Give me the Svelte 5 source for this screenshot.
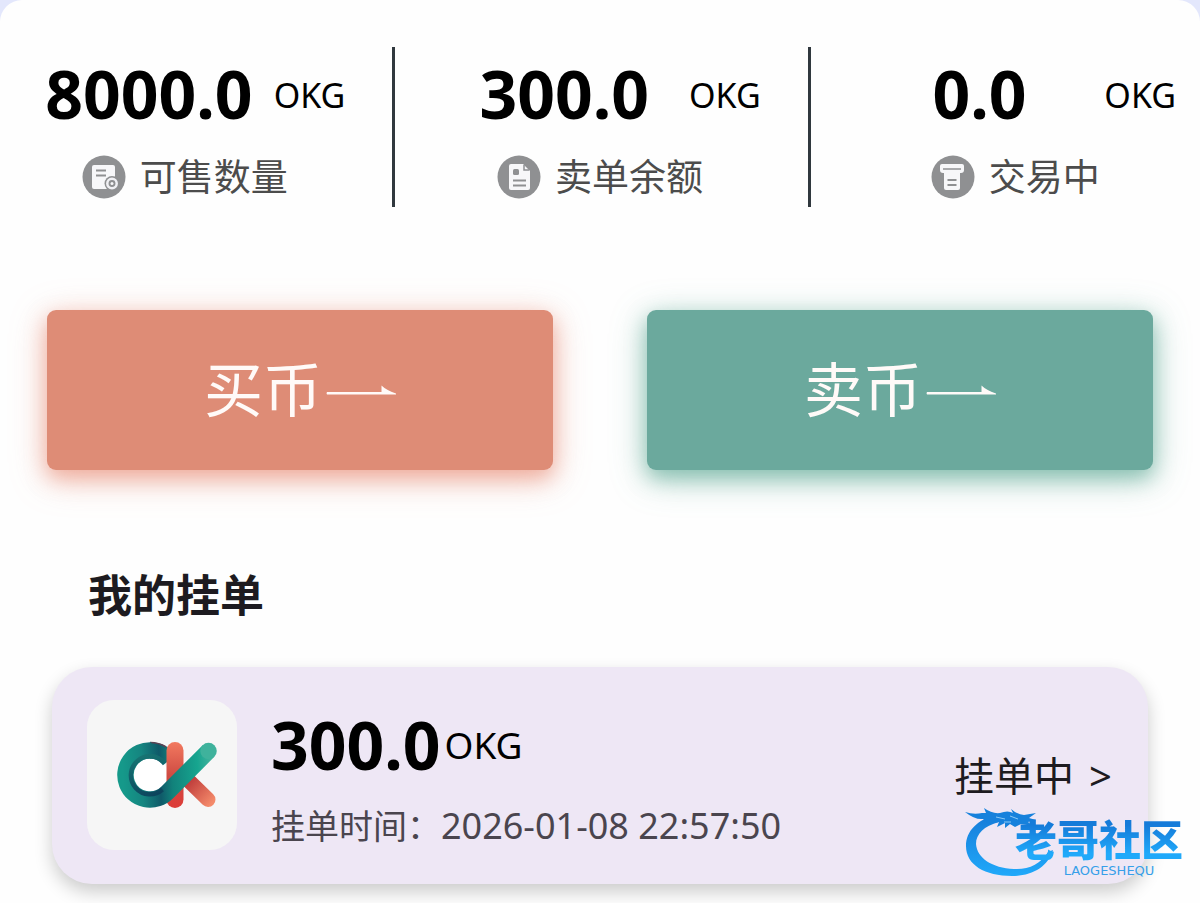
<script>
  const stats = [
    { value: '8000.0', unit: 'OKG', label: '可售数量', icon: 'available' },
    { value: '300.0', unit: 'OKG', label: '卖单余额', icon: 'balance' },
    { value: '0.0', unit: 'OKG', label: '交易中', icon: 'trading' }
  ];
  const actions = [
    { label: '买币', kind: 'buy' },
    { label: '卖币', kind: 'sell' }
  ];
  const orders = [
    { amount: '300.0', unit: 'OKG', time: '2026-01-08 22:57:50', status: '挂单中' }
  ];
</script>

<main>
  <section class="stats">
    {#each stats as s}
      <div class="stat">
        <div class="figure"><strong>{s.value}</strong><span>{s.unit}</span></div>
        <div class="caption">
          <svg class="badge" viewBox="0 0 44 44" aria-hidden="true">
            <circle cx="22" cy="22" r="21.5" fill="#8f9092" />
            {#if s.icon === 'available'}
              <path d="M12 10h19a2 2 0 0 1 2 2v20a2 2 0 0 1-2 2H12a2 2 0 0 1-2-2V12a2 2 0 0 1 2-2z" fill="#f7f7f9" />
              <path d="M14 15.500h10M14 20.500h10" stroke="#8f9092" stroke-width="2" />
              <circle cx="30" cy="28.500" r="7.500" fill="#8f9092" />
              <circle cx="30" cy="28.500" r="4.700" fill="#8f9092" stroke="#f0f0f4" stroke-width="2.500" />
              <circle cx="30" cy="28.500" r="1.500" fill="#f7f7f9" />
            {:else if s.icon === 'balance'}
              <path d="M14 9h12l7 7v17a2 2 0 0 1-2 2H14a2 2 0 0 1-2-2V11a2 2 0 0 1 2-2z" fill="#f7f7f9" />
              <path d="M27 10v5h5" fill="none" stroke="#8f9092" stroke-width="1.500" />
              <rect x="16" y="14" width="6" height="6" rx="1.500" fill="#8f9092" />
              <path d="M16 25.500h13M16 30.500h13" stroke="#8f9092" stroke-width="2" />
            {:else}
              <path d="M11 9h20a2 2 0 0 1 2 2v4q0 3-3 3H12q-3 0-3-3v-4a2 2 0 0 1 2-2z" fill="#f7f7f9" />
              <path d="M12 14h18" stroke="#8f9092" stroke-width="1.500" />
              <path d="M13 15h16v18a2 2 0 0 1-2 2H15a2 2 0 0 1-2-2z" fill="#f7f7f9" />
              <path d="M16.500 25h9M16.500 30h9" stroke="#8f9092" stroke-width="2" />
            {/if}
          </svg>
          <span>{s.label}</span>
        </div>
      </div>
    {/each}
  </section>

  <section class="actions">
    {#each actions as a}
      <button type="button" class={a.kind}>
        {a.label}
        <svg viewBox="0 0 70 16" aria-hidden="true">
          <path d="M1 8h54.500V1.500Q60 6 70 9.500v1H1q-1-1.200 0-2.500z" fill="currentColor" />
        </svg>
      </button>
    {/each}
  </section>

  <h2>我的挂单</h2>

  {#each orders as o}
    <article class="order">
      <div class="logo">
        <svg viewBox="-12 0 116 68" aria-hidden="true">
          <defs>
            <linearGradient id="ring" gradientUnits="userSpaceOnUse" x1="6" y1="14" x2="94" y2="10">
              <stop offset="0" stop-color="#15998a" />
              <stop offset=".22" stop-color="#158580" />
              <stop offset=".42" stop-color="#0f5a69" />
              <stop offset=".56" stop-color="#12827b" />
              <stop offset=".85" stop-color="#16a58f" />
              <stop offset="1" stop-color="#3fb29c" />
            </linearGradient>
            <linearGradient id="inner" x1="0" y1="0" x2="0" y2="1">
              <stop offset="0" stop-color="#17706f" />
              <stop offset="1" stop-color="#0b3c58" />
            </linearGradient>
            <linearGradient id="stem" x1="0" y1="0" x2="0" y2="1">
              <stop offset="0" stop-color="#f2795f" />
              <stop offset=".5" stop-color="#cf4c43" />
              <stop offset="1" stop-color="#dd3c38" />
            </linearGradient>
            <linearGradient id="leg" gradientUnits="userSpaceOnUse" x1="70" y1="38" x2="96" y2="62">
              <stop offset="0" stop-color="#b93436" />
              <stop offset="1" stop-color="#f48a6a" />
            </linearGradient>
          </defs>
          <circle cx="34" cy="34" r="18" fill="#fff" />
          <path d="M34 9.500A24.500 24.500 0 0 1 53.500 19.200" fill="none" stroke="url(#ring)" stroke-width="16.500" />
          <path d="M34 1.500Q43 1.500 50 6" fill="none" stroke="#5b4253" stroke-width="1.500" />
          <rect x="50.500" y="1" width="17" height="66" rx="8.500" fill="url(#stem)" />
          <path d="M72 39L92 58.500" stroke="url(#leg)" stroke-width="15" stroke-linecap="round" />
          <path d="M92.500 10L51.300 51.300A24.500 24.500 0 1 1 35 9.500" fill="none" stroke="url(#ring)" stroke-width="16.500" stroke-linejoin="round" />
          <circle cx="92.500" cy="10" r="8.250" fill="#3fb29c" />
          <path d="M46.500 48.500A19 19 0 1 1 48 21.500" fill="none" stroke="url(#inner)" stroke-width="4.500" opacity=".8" />
        </svg>
      </div>
      <div class="details">
        <div class="amount"><strong>{o.amount}</strong><span>{o.unit}</span></div>
        <div class="time">挂单时间：<time>{o.time}</time></div>
      </div>
      <a class="status" href="#order">{o.status}<span>&gt;</span></a>
      <div class="mark">
        <svg viewBox="0 0 92 70" aria-hidden="true">
          <defs>
            <linearGradient id="dragon" x1="0" y1="0" x2="0" y2="1">
              <stop offset="0" stop-color="#167bd8" />
              <stop offset="1" stop-color="#20a9fa" />
            </linearGradient>
          </defs>
          <path d="M32 6C12 12 1 23 1 38c0 19 19 30 46 30 20 0 36-9 41-26l-5 2C76 56 63 62 49 61 27 60 12 50 11 36 11 26 19 18 34 14z" fill="url(#dragon)" />
          <path d="M0 4q9 3 17 1l4 0-2-5q8 6 16 5 8-3 13 0l-2-4q7 6 13 6l12-2-7 5 7 2-8 2 5 4-12-2-6 3-5-3-5 4v-5l-8 4 2-5-10 2-6-5Q10 12 0 4z" fill="#1681dc" />
          <path d="M31 9l9 2M45 8l8 3M39 14l7 0" stroke="#8bc9f5" stroke-width="1" />
        </svg>
        <div class="words"><b>老哥社区</b><small>LAOGESHEQU</small></div>
      </div>
    </article>
  {/each}
</main>

<style>
  :global(body) {
    margin: 0;
    background: #e3e7fc;
  }
  main {
    box-sizing: border-box;
    min-height: 100vh;
    padding: 47px 0 20px;
    overflow: hidden;
    border-radius: 22px 22px 0 0;
    background: #fefefe;
    color: #000;
    font-family: "Noto Sans", "Noto Sans CJK SC", sans-serif;
  }
  .stats {
    display: grid;
    grid-template-columns: repeat(3, 1fr);
    column-gap: 46px;
  }
  .stat {
    position: relative;
    display: flex;
    flex-direction: column;
    justify-content: space-between;
    height: 160px;
    box-sizing: border-box;
    padding-bottom: 8px;
  }
  .stat + .stat::before {
    content: "";
    position: absolute;
    left: -23px;
    top: 0;
    bottom: 0;
    width: 3px;
    background: #30383e;
  }
  .figure {
    display: flex;
    align-items: center;
    height: 92px;
    padding: 0 24px;
    line-height: 92px;
  }
  .figure strong {
    flex: 1;
    text-align: center;
  }
  strong {
    font-size: 66px;
    font-weight: 700;
  }
  .figure span {
    padding-top: 4px;
    font-size: 34px;
  }
  .caption {
    display: flex;
    align-items: center;
    justify-content: center;
    gap: 14px;
    height: 44px;
    color: #4c4c4c;
    font-size: 37px;
    line-height: 44px;
  }
  .badge {
    width: 44px;
    height: 44px;
  }
  .actions {
    display: grid;
    grid-template-columns: 1fr 1fr;
    gap: 94px;
    padding: 103px 47px 0;
  }
  button {
    display: flex;
    align-items: center;
    justify-content: center;
    gap: 4px;
    height: 160px;
    padding: 0 0 8px;
    border: 0;
    border-radius: 9px;
    color: #fffaf8;
    font: inherit;
    font-size: 59px;
    cursor: pointer;
  }
  button svg {
    width: 70px;
    height: 16px;
    margin-top: 12px;
  }
  .buy {
    background: #de8c76;
    box-shadow: 0 8px 36px rgba(232, 132, 108, .4), 0 8px 20px rgba(232, 132, 108, .5);
  }
  .sell {
    background: #6ba99d;
    box-shadow: 0 8px 36px rgba(75, 160, 138, .4), 0 8px 20px rgba(75, 160, 138, .5);
  }
  h2 {
    margin: 93px 88px 40px;
    color: #1d1b20;
    font-size: 44px;
    font-weight: 700;
    line-height: 64px;
  }
  .order {
    position: relative;
    display: flex;
    align-items: flex-start;
    margin: 0 52px;
    padding: 33px 36px 20px 35px;
    border-radius: 40px;
    background: #eee7f5;
    box-shadow: 0 8px 18px rgba(0, 0, 0, .2);
  }
  .logo {
    display: grid;
    place-items: center;
    width: 150px;
    height: 150px;
    border-radius: 27px;
    background: #f6f6f6;
  }
  .logo svg {
    width: 116px;
    height: 68px;
  }
  .details {
    flex: 1;
    padding-left: 34px;
  }
  .amount {
    display: flex;
    align-items: center;
    gap: 4px;
    height: 88px;
    line-height: 88px;
  }
  .amount span {
    padding-top: 2px;
    font-size: 37px;
  }
  .time {
    height: 76px;
    color: #4a454e;
    font-size: 34px;
    line-height: 76px;
  }
  time {
    font-size: 36px;
  }
  .status {
    display: flex;
    gap: 15px;
    padding-top: 46px;
    color: #1d1b20;
    font-size: 40px;
    line-height: 60px;
    text-decoration: none;
  }
  .mark {
    position: absolute;
    right: -35px;
    bottom: 6px;
    display: flex;
  }
  .mark svg {
    width: 92px;
    height: 70px;
    margin-right: -42px;
  }
  .words {
    display: flex;
    flex-direction: column;
    align-items: center;
    padding-top: 4px;
  }
  .words b {
    background: linear-gradient(#157bd9 25%, #20a9fa 80%);
    background-clip: text;
    color: transparent;
    font-family: "Noto Sans CJK SC", sans-serif;
    font-size: 42px;
    font-weight: 900;
    line-height: 52px;
  }
  .words small {
    padding-left: 20px;
    color: #369fe9;
    font-family: "DejaVu Sans", sans-serif;
    font-size: 13px;
    line-height: 14px;
  }
</style>
